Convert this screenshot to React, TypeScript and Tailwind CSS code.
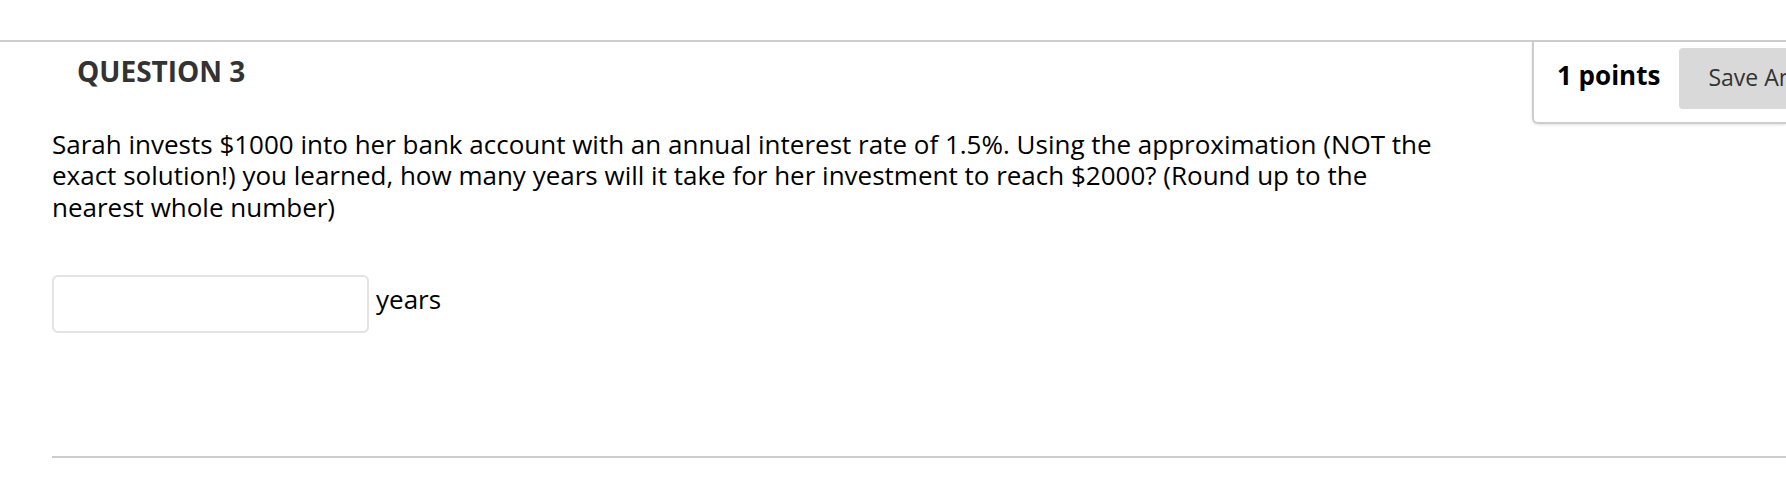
import React from 'react';

function PointsBox() {
  return (
    <div className="w-[254px] shrink-0 overflow-hidden border-l-2 border-b-2 border-[#cdcdcd] rounded-bl-[6px] shadow-[0_1px_3px_rgba(0,0,0,0.12)] pl-[23px] pt-[6px] pb-[13px]">
      <div className="flex items-center gap-[19px]">
        <span className="pb-[7px] text-[26px] font-bold leading-[54px] text-black whitespace-nowrap">1 points</span>
        <button className="shrink-0 h-[61px] pl-[29px] pr-[29px] pb-[3px] bg-[#d9d9d9] rounded-[4px] text-[23px] text-[#333] whitespace-nowrap">
          Save Answer
        </button>
      </div>
    </div>
  );
}

export default function App() {
  return (
    <div className="h-[498px] w-full overflow-hidden bg-white font-['Open_Sans',sans-serif]">
      <div className="h-[40px]" />
      <div className="border-t-2 border-[#cdcdcd]">
        <div className="flex items-start justify-between">
          <h2 className="ml-[77px] mt-[10px] text-[28px] leading-[38px] font-bold text-[#333]">QUESTION 3</h2>
          <PointsBox />
        </div>
        <p className="mt-[5px] ml-[52px] max-w-[1395px] text-[26px] leading-[31.3px] text-black">
          Sarah invests $1000 into her bank account with an annual interest rate of 1.5%. Using the approximation (NOT the
          exact solution!) you learned, how many years will it take for her investment to reach $2000? (Round up to the
          nearest whole number)
        </p>
        <div className="mt-[52px] ml-[52px] flex items-center">
          <input
            type="text"
            className="w-[317px] h-[58px] border-2 border-[#e3e3e3] rounded-[6px] outline-none px-3 text-[26px]"
          />
          <span className="ml-[7px] pb-[8px] text-[26px] text-black">years</span>
        </div>
        <div className="mt-[123px] ml-[52px] border-t-2 border-[#cdcdcd]" />
      </div>
    </div>
  );
}
